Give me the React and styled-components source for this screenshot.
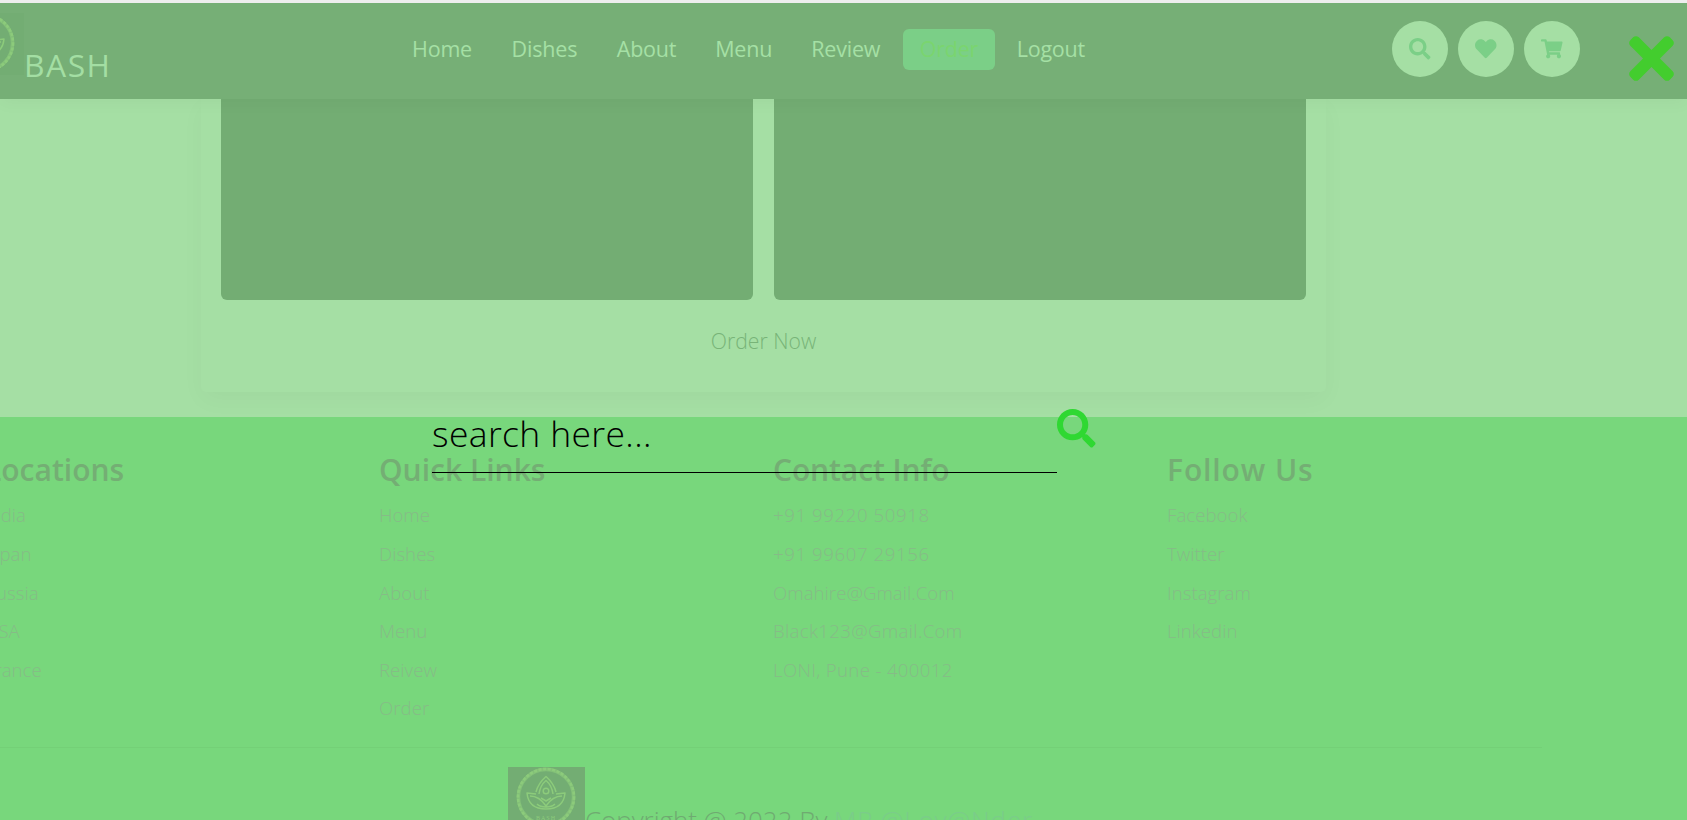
import React from 'react';
import styled, { createGlobalStyle } from 'styled-components';
import { FaSearch, FaHeart, FaShoppingCart, FaTimes } from 'react-icons/fa';

const GlobalStyle = createGlobalStyle`
  * { box-sizing: border-box; margin: 0; padding: 0; }
  body { background: #a5dfa4; overflow: hidden; font-family: 'Open Sans', 'Noto Sans', sans-serif; }
  svg { display: block; }
`;

const Page = styled.div`
  position: relative;
  height: 820px;
  overflow: hidden;
  display: flex;
  flex-direction: column;
`;

const Header = styled.header`
  position: relative;
  z-index: 2;
  flex: none;
  display: flex;
  height: 99px;
  border-top: 3px solid #eeeeee;
  background: #76af76;
  padding-right: 107px;
  box-shadow: 0 5px 15px rgba(0, 0, 0, 0.03);
`;

const Brand = styled.a`
  display: flex;
  align-items: flex-start;
  width: 448px;
  margin-left: -53px;
  padding-top: 10px;
`;

const BrandName = styled.span`
  margin-top: 32px;
  font-size: 31.8px;
  line-height: 40px;
  letter-spacing: 1.5px;
  color: #a3dea3;
`;

const Nav = styled.nav`
  display: flex;
  gap: 5.4px;
  padding-top: 26px;
`;

const NavLink = styled.a`
  width: ${(p) => p.$width}px;
  height: 41px;
  border-radius: 6px;
  text-align: center;
  font-size: 21.5px;
  line-height: 39.5px;
  font-weight: 500;
  letter-spacing: -0.2px;
  color: ${(p) => (p.$active ? '#7ad56f' : '#a5e0a5')};
  background: ${(p) => (p.$active ? '#7bcf87' : 'transparent')};
`;

const Actions = styled.div`
  display: flex;
  gap: 10px;
  margin-left: auto;
  padding-top: 18px;
`;

const RoundButton = styled.a`
  display: flex;
  align-items: center;
  justify-content: center;
  width: 56px;
  height: 56px;
  border-radius: 50%;
  background: #a5dfa4;
  color: #7bcf87;
  font-size: 21.5px;
`;

const OrderSection = styled.section`
  flex: none;
  height: 318px;
  padding: 0 361px 25px 201px;
`;

const OrderCard = styled.form`
  display: flex;
  flex-direction: column;
  align-items: center;
  height: 293px;
  padding: 0 20px;
  border-radius: 0 0 5px 5px;
  background: #a5dfa4;
  box-shadow: 0 8px 24px rgba(0, 0, 0, 0.03);
`;

const Fields = styled.div`
  display: grid;
  grid-template-columns: 1fr 1fr;
  gap: 21px;
  width: 100%;
  height: 201px;
`;

const Field = styled.div`
  border-radius: 0 0 6px 6px;
  background: #73ad73;
`;

const OrderButton = styled.span`
  margin-top: 21px;
  font-size: 21.2px;
  line-height: 40px;
  font-weight: 300;
  color: #78b478;
`;

const Footer = styled.footer`
  flex: 1;
  background: #78d77c;
  padding-top: 32px;
`;

const Columns = styled.div`
  display: grid;
  grid-template-columns: repeat(4, 394px);
  margin-left: -15px;
  height: 298px;
`;

const ColumnTitle = styled.h3`
  margin-bottom: 6.4px;
  font-size: 30px;
  line-height: 41px;
  font-weight: 600;
  letter-spacing: ${(p) => p.$spacing}px;
  white-space: nowrap;
  color: #74ae74;
`;

const ColumnLink = styled.a`
  display: block;
  font-size: 18.6px;
  line-height: 38.6px;
  font-weight: 300;
  letter-spacing: ${(p) => p.$spacing}px;
  white-space: nowrap;
  color: #86bb87;
`;

const Credit = styled.div`
  display: flex;
  align-items: flex-start;
  width: 1542px;
  padding: 19px 0 0 508px;
  border-top: 1px solid #74d077;
`;

const CreditText = styled.p`
  margin: 33px 0 0;
  font-size: 26px;
  line-height: 40px;
  font-weight: 300;
  letter-spacing: -0.05px;
  white-space: nowrap;
  color: #6faa71;
`;

const Author = styled.span`
  letter-spacing: 0.8px;
  color: #7bcc8a;
`;

const SearchBar = styled.div`
  position: absolute;
  z-index: 3;
  top: 407px;
  left: 432px;
  display: flex;
  align-items: flex-start;
`;

const SearchField = styled.div`
  width: 625px;
  height: 66px;
  border-bottom: 1px solid #000;
  font-size: 35.5px;
  line-height: 53px;
  font-weight: 300;
  letter-spacing: 0.35px;
  color: #000;
`;

const SearchIcon = styled(FaSearch)`
  margin-top: 2px;
  font-size: 38.5px;
  color: #2fd832;
`;

const CloseIcon = styled(FaTimes)`
  position: absolute;
  z-index: 3;
  top: 26px;
  left: 1629px;
  width: 45px;
  height: 65px;
  color: #43cd2e;
`;

const LogoSvg = styled.svg`
  flex: none;
  width: 77px;
  height: 62px;
`;

const Logo = ({ ink = '#8ccb7b' }) => (
  <LogoSvg viewBox="0 0 77 62" fill="none" stroke={ink}>
    <rect width="77" height="62" fill="#73ad73" stroke="none" />
    <circle cx="38" cy="30" r="27.6" strokeWidth="3.6" opacity="0.65" />
    <circle cx="38" cy="30" r="28" strokeWidth="2.6" strokeDasharray="3 1.6" />
    <g strokeWidth="1.5" strokeLinejoin="round">
      <path d="M28 25C30 17 34 13 38 9.5C42 13 46 17 48 25" />
      <path d="M31 27C32 20 35 16 38 13.5C41 16 44 20 45 27" />
      <circle cx="38" cy="24" r="2.8" />
      <path d="M28 27L19 26C20 37 27 42 38 42C49 42 56 37 57 26L48 27" />
      <path d="M22 29C29 29 34 33 38 39C42 33 47 29 54 29M29 37C33 41 43 41 47 37M33 31L38 34L43 31" />
    </g>
    <text x="38" y="53" textAnchor="middle" fontSize="6" fontFamily="Liberation Serif, serif" letterSpacing="1" fill={ink} stroke="none">BASH</text>
  </LogoSvg>
);

const navLinks = [
  ['Home', 94],
  ['Dishes', 100],
  ['About', 93.5],
  ['Menu', 90],
  ['Review', 103.5],
  ['Order', 92],
  ['Logout', 101],
];

const columns = [
  { title: 'Locations', spacing: 0, links: ['India', 'Japan', 'Russia', 'USA', 'France'] },
  { title: 'Quick Links', spacing: 0, links: ['Home', 'Dishes', 'About', 'Menu', 'Reivew', 'Order'] },
  {
    title: 'Contact Info',
    spacing: -0.1,
    links: ['+91 99220 50918', '+91 99607 29156', 'Omahire@Gmail.Com', 'Black123@Gmail.Com', 'LONI, Pune - 400012'],
  },
  { title: 'Follow Us', spacing: 0.9, links: ['Facebook', 'Twitter', 'Instagram', 'Linkedin'] },
];

const linkSpacing = (text) => {
  if (text.startsWith('+')) return 0.6;
  return /\d/.test(text) ? 0.35 : 0.04;
};

export default function App() {
  return (
    <Page>
      <GlobalStyle />
      <Header>
        <Brand>
          <Logo />
          <BrandName>BASH</BrandName>
        </Brand>
        <Nav>
          {navLinks.map(([label, width]) => (
            <NavLink key={label} $width={width} $active={label === 'Order'}>
              {label}
            </NavLink>
          ))}
        </Nav>
        <Actions>
          <RoundButton><FaSearch /></RoundButton>
          <RoundButton><FaHeart /></RoundButton>
          <RoundButton><FaShoppingCart /></RoundButton>
        </Actions>
      </Header>

      <OrderSection>
        <OrderCard>
          <Fields>
            <Field />
            <Field />
          </Fields>
          <OrderButton>Order Now</OrderButton>
        </OrderCard>
      </OrderSection>

      <Footer>
        <Columns>
          {columns.map(({ title, spacing, links }) => (
            <div key={title}>
              <ColumnTitle $spacing={spacing}>{title}</ColumnTitle>
              {links.map((link) => (
                <ColumnLink key={link} $spacing={linkSpacing(link)}>
                  {link}
                </ColumnLink>
              ))}
            </div>
          ))}
        </Columns>
        <Credit>
          <Logo />
          <CreditText>
            Copyright @ 2022 By <Author>MR.@Lov@Nder</Author>
          </CreditText>
        </Credit>
      </Footer>

      <SearchBar>
        <SearchField>search here...</SearchField>
        <SearchIcon />
      </SearchBar>
      <CloseIcon preserveAspectRatio="xMidYMid meet" />
    </Page>
  );
}
